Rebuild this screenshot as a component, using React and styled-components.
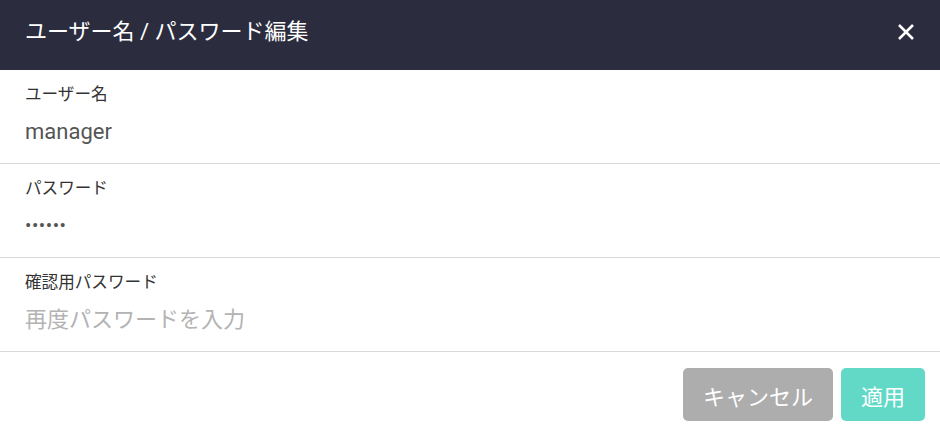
import React from "react";
import styled, { createGlobalStyle } from "styled-components";

const Global = createGlobalStyle`
  body {
    margin: 0;
    background: #fff;
    font-family: Roboto, "Noto Sans CJK JP", sans-serif;
  }
`;

const Dialog = styled.div`
  width: 940px;
  height: 435px;
  display: flex;
  flex-direction: column;
  background: #fff;
`;

const Header = styled.div`
  height: 70px;
  flex-shrink: 0;
  background: #2b2c3e;
  display: flex;
  align-items: center;
  justify-content: space-between;
  padding: 0 24px 6px 25px;
  box-sizing: border-box;
`;

const Title = styled.h1`
  margin: 0;
  font-size: 22px;
  line-height: 24px;
  font-weight: 400;
  color: #fff;
`;

const Close = styled.button`
  border: none;
  background: none;
  padding: 0;
  width: 20px;
  height: 20px;
  display: flex;
  align-items: center;
  justify-content: center;
  cursor: pointer;
`;

const Field = styled.div`
  padding: 13px 25px 18px;
  border-bottom: 1px solid #d9d9d9;
  display: flex;
  flex-direction: column;
  gap: 13px;
`;

const Label = styled.label`
  font-size: 16.6px;
  line-height: 23px;
  color: #333;
`;

const Value = styled.div`
  line-height: 26px;
  color: ${(p) => (p.placeholder ? "#b3b3b3" : "#555")};
  letter-spacing: ${(p) => (p.secret ? "0.5px" : "0")};
  font-size: ${(p) => (p.secret ? "19px" : "22px")};
`;

const Footer = styled.div`
  display: flex;
  justify-content: flex-end;
  gap: 8px;
  padding: 16px 15px 0;
`;

const Button = styled.button`
  height: 53px;
  padding: 0 ${(p) => p.pad}px;
  border: none;
  border-radius: 5px;
  background: ${(p) => p.bg};
  color: #fff;
  font-family: inherit;
  font-size: 22px;
  cursor: pointer;
`;

export default function App() {
  return (
    <Dialog>
      <Global />
      <Header>
        <Title>ユーザー名 / パスワード編集</Title>
        <Close>
          <svg width="18" height="18" viewBox="0 0 18 18">
            <path d="M2 2L16 16M16 2L2 16" stroke="#fff" strokeWidth="2.6" />
          </svg>
        </Close>
      </Header>
      <Field>
        <Label>ユーザー名</Label>
        <Value>manager</Value>
      </Field>
      <Field>
        <Label>パスワード</Label>
        <Value secret>••••••</Value>
      </Field>
      <Field>
        <Label>確認用パスワード</Label>
        <Value placeholder>再度パスワードを入力</Value>
      </Field>
      <Footer>
        <Button bg="#adadad" pad={20}>キャンセル</Button>
        <Button bg="#62d9c7" pad={20}>適用</Button>
      </Footer>
    </Dialog>
  );
}
